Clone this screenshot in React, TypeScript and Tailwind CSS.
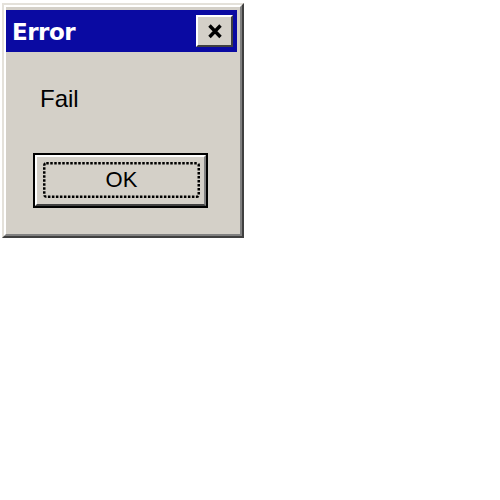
export default function App() {
  return (
    <div className="w-[500px] h-[500px] bg-white pl-[2px] pt-[3px]">
      <div className="w-[242px] h-[235px] bg-[#d4d0c8] border-2 border-t-[#e4e1da] border-l-[#e4e1da] border-b-[#404040] border-r-[#404040]">
        <div className="h-full flex flex-col border-2 border-t-white border-l-white border-b-[#808080] border-r-[#808080]">
          {/* title bar */}
          <div className="mt-[3px] mr-[3px] h-[42px] bg-[#0a0aa2] flex items-center justify-between pl-[6px] pr-[4px]">
            <span
              className="text-white font-bold text-[23px] leading-none pt-[3px] tracking-[-0.5px]"
              style={{ fontFamily: '"DejaVu Sans", Verdana, sans-serif' }}
            >
              Error
            </span>
            <div className="w-[37px] h-[32px] bg-[#d4d0c8] border-2 border-t-white border-l-white border-b-[#404040] border-r-[#404040] flex items-center justify-center">
              <svg width="16" height="15" viewBox="0 0 16 15">
                <path d="M2.5 1.5 L13.5 13 M13.5 1.5 L2.5 13" stroke="#000" strokeWidth="3.4" />
              </svg>
            </div>
          </div>

          {/* message */}
          <div
            className="mt-[35px] pl-[34px] text-[24px] leading-none text-black"
            style={{ fontFamily: '"Liberation Sans", Arial, sans-serif' }}
          >
            Fail
          </div>

          {/* OK button */}
          <div className="mt-[42px] ml-[27px] w-[175px] h-[55px] border-2 border-black">
            <div className="h-full border-2 border-t-white border-l-white border-b-[#404040] border-r-[#808080] pt-[5px] pl-[6px] pr-[4px] pb-[6px]">
              <div className="relative h-full flex items-center justify-center">
                <svg className="absolute inset-0" width="100%" height="100%">
                  <rect
                    x="1.25"
                    y="1.25"
                    width="calc(100% - 2.5px)"
                    height="calc(100% - 2.5px)"
                    fill="none"
                    stroke="#000"
                    strokeWidth="2.5"
                    strokeDasharray="2.5 1.5"
                    rx="2"
                  />
                </svg>
                <span
                  className="text-[22px] leading-none text-black"
                  style={{ fontFamily: '"Liberation Sans", Arial, sans-serif' }}
                >
                  OK
                </span>
              </div>
            </div>
          </div>
        </div>
      </div>
    </div>
  );
}
